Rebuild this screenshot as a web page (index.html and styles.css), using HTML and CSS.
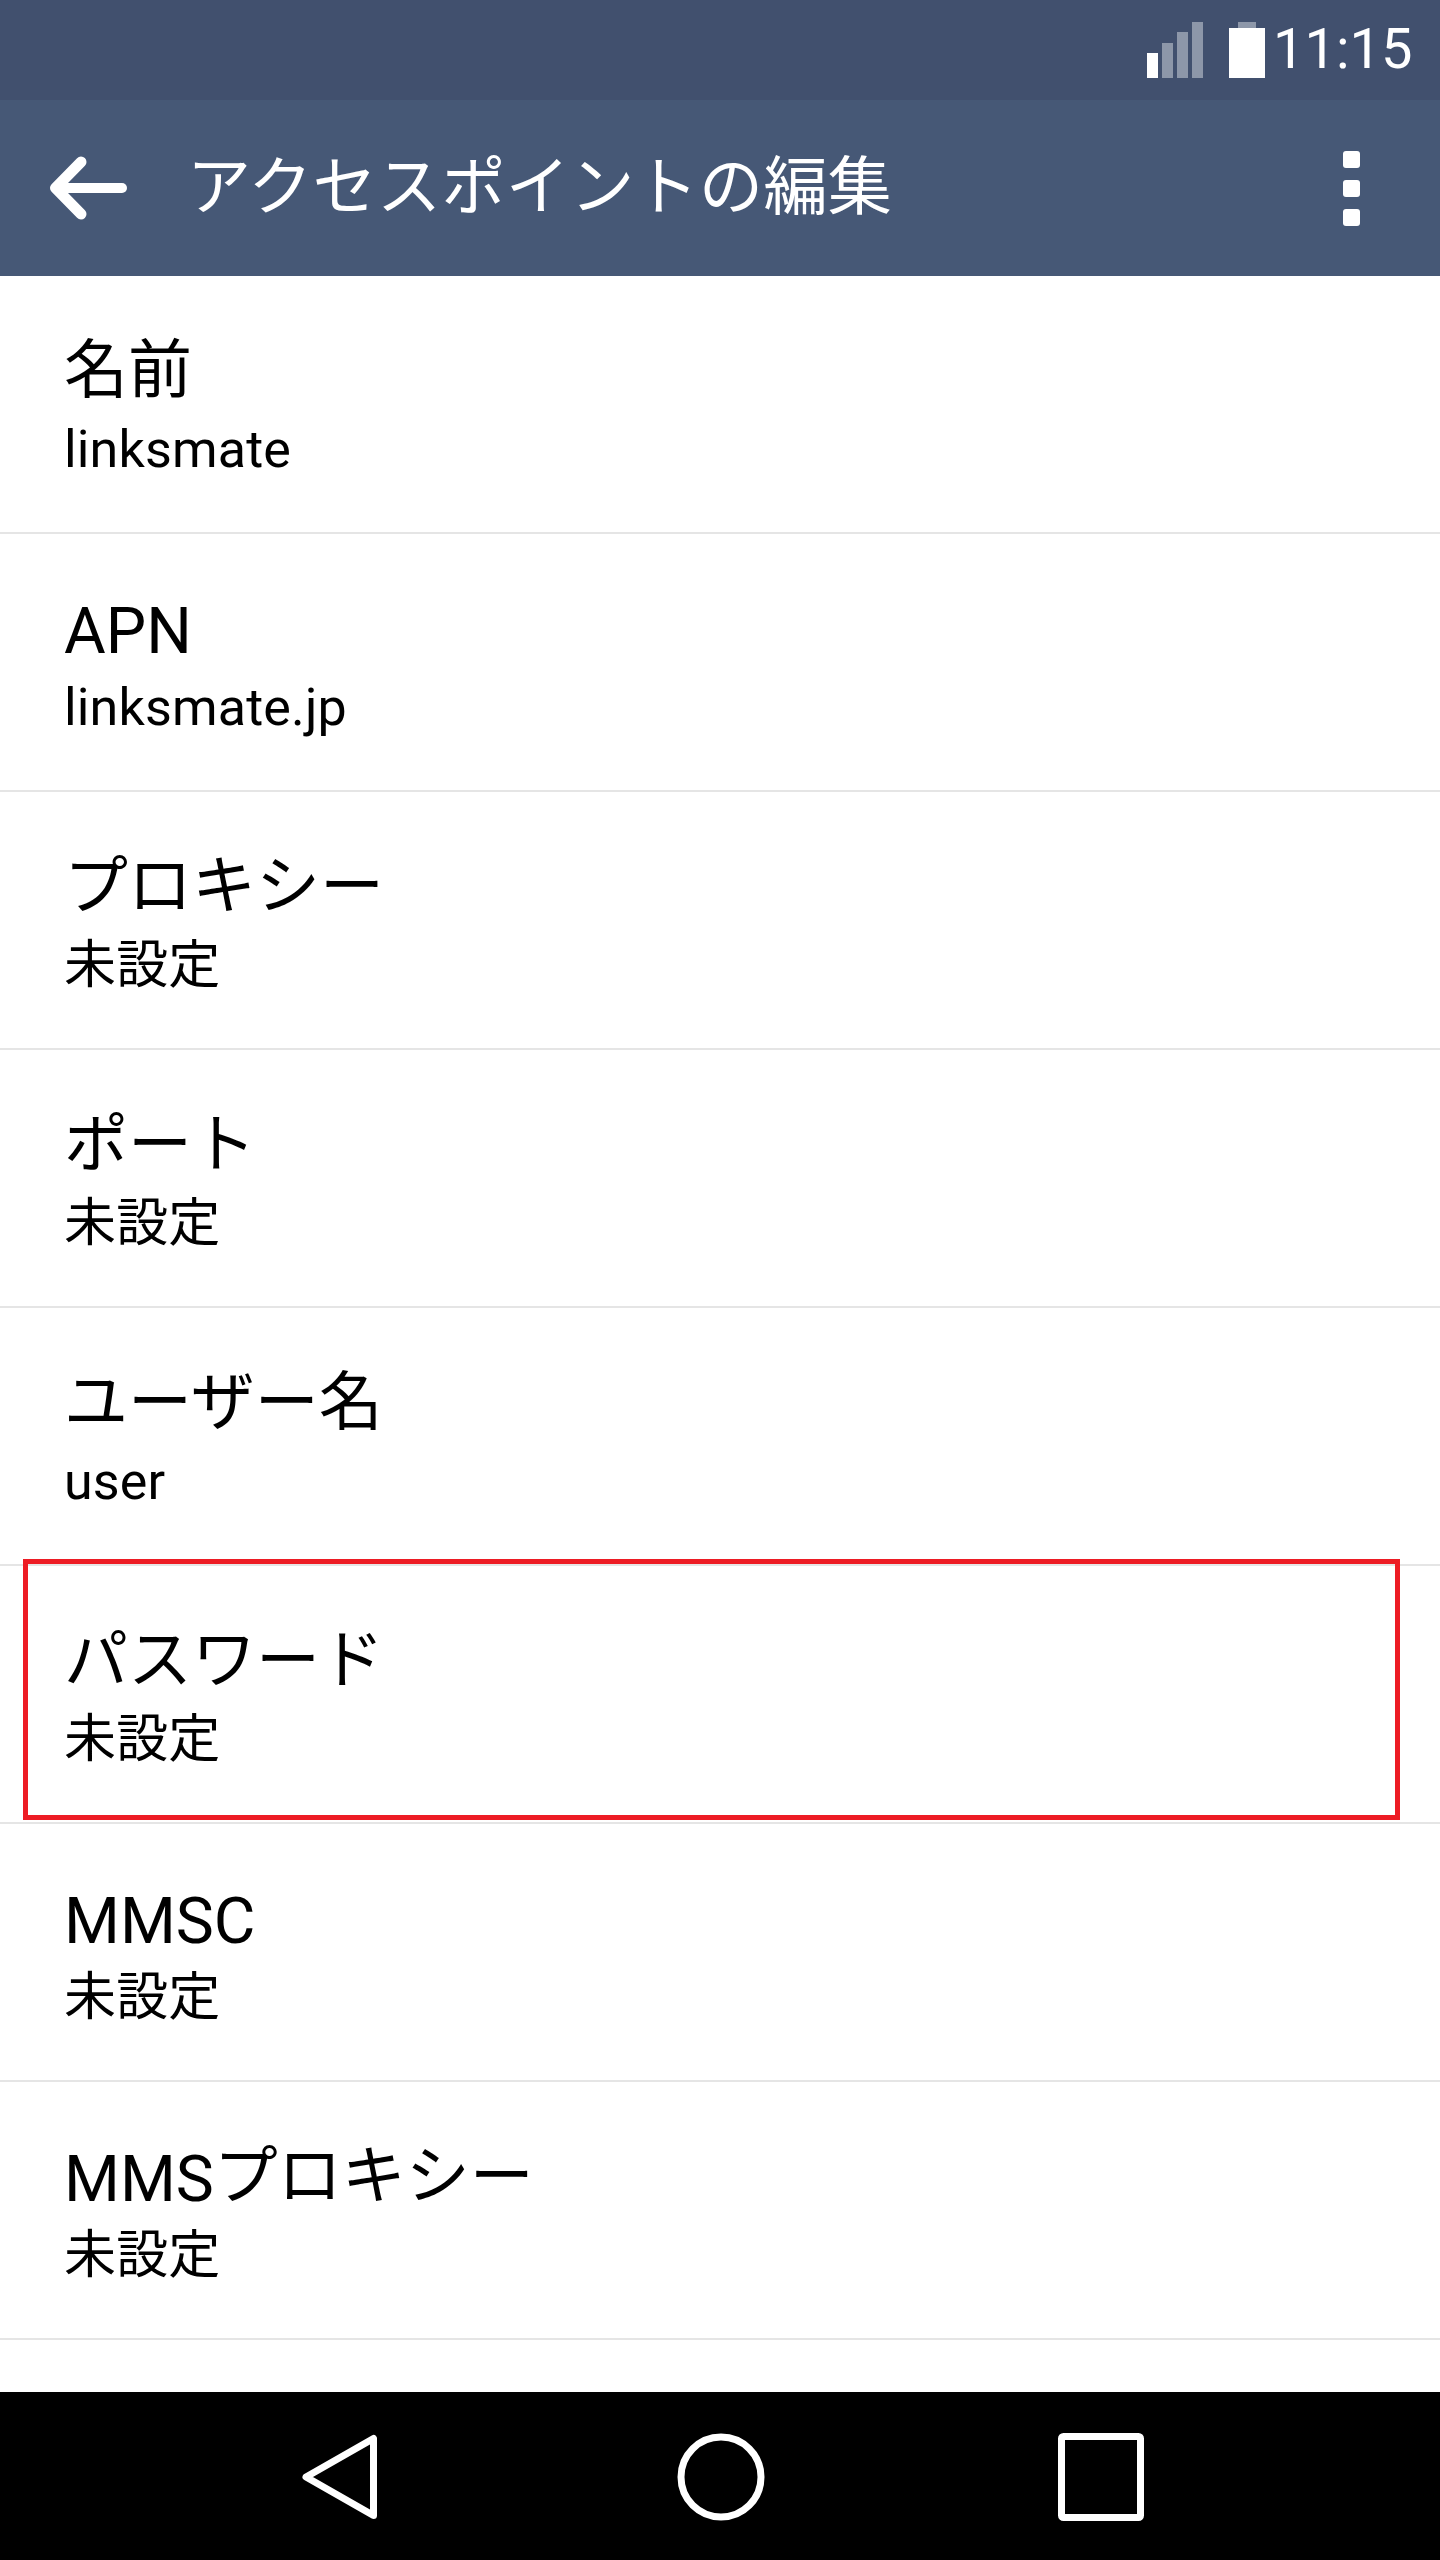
FILE: index.html
```html
<!DOCTYPE html>
<html lang="ja">
<head>
<meta charset="utf-8">
<title>アクセスポイントの編集</title>
<link rel="stylesheet" href="styles.css">
</head>
<body>
<div class="phone">
  <header class="status">
    <svg class="signal" width="56" height="56" viewBox="0 0 56 56">
      <rect class="on" x="0" y="31" width="11" height="25"/>
      <rect class="off" x="15" y="21" width="11" height="35"/>
      <rect class="off" x="30" y="10" width="11" height="46"/>
      <rect class="off" x="45" y="0" width="11" height="56"/>
    </svg>
    <svg class="battery" width="36" height="56" viewBox="0 0 36 56">
      <rect class="off" x="9" y="0" width="18" height="6"/>
      <rect class="on" x="0" y="6" width="36" height="50"/>
    </svg>
    <span class="clock">11:15</span>
  </header>
  <div class="toolbar">
    <svg class="back" width="78" height="64" viewBox="0 0 78 64">
      <path d="M73 32H7" fill="none" stroke="#fff" stroke-width="10" stroke-linecap="round"/>
      <path d="M32 6 6.500 32 32 58" fill="none" stroke="#fff" stroke-width="11" stroke-linecap="round" stroke-linejoin="round"/>
    </svg>
    <h1 class="title">アクセスポイントの編集</h1>
    <div class="more"><i></i><i></i><i></i></div>
  </div>
  <main class="list">
    <div class="row"><div class="label">名前</div><div class="value">linksmate</div></div>
    <div class="row"><div class="label"><span class="latin">APN</span></div><div class="value">linksmate.jp</div></div>
    <div class="row"><div class="label">プロキシー</div><div class="value">未設定</div></div>
    <div class="row"><div class="label">ポート</div><div class="value">未設定</div></div>
    <div class="row"><div class="label">ユーザー名</div><div class="value">user</div></div>
    <div class="row"><div class="label">パスワード</div><div class="value">未設定</div><span class="redbox"></span></div>
    <div class="row"><div class="label"><span class="latin">MMSC</span></div><div class="value">未設定</div></div>
    <div class="row"><div class="label"><span class="latin">MMS</span>プロキシー</div><div class="value">未設定</div></div>
  </main>
  <nav class="nav">
    <svg class="nav-back" width="78" height="88" viewBox="0 0 78 88"><path d="M5 44 72.500 5.500V82.500Z"/></svg>
    <svg class="nav-home" width="88" height="88" viewBox="0 0 88 88"><circle cx="44" cy="44" r="40"/></svg>
    <svg class="nav-recent" width="86" height="88" viewBox="0 0 86 88"><rect x="3.500" y="3.500" width="79" height="81" rx="2"/></svg>
  </nav>
</div>
</body>
</html>
```
FILE: styles.css
```css
* { box-sizing: border-box; }
html, body { margin: 0; padding: 0; background: #fff; }
.phone { width: 1440px; height: 2560px; display: flex; flex-direction: column; overflow: hidden; font-family: Roboto, "Noto Sans CJK JP", sans-serif; color: #000; }
.status { flex: 0 0 100px; background: #41506e; display: flex; align-items: flex-start; padding: 22px 0 0 1147px; color: #fff; }
.signal, .battery { display: block; flex: none; }
.battery { margin-left: 26px; }
.on { fill: #fff; }
.off { fill: #8d97a9; }
.clock { flex: none; margin-left: 8px; font-size: 56px; font-weight: 400; line-height: 54px; }
.toolbar { flex: 0 0 176px; background: #465876; display: flex; align-items: center; padding-left: 49px; color: #fff; }
.back { display: block; flex: none; }
.title { margin: 0 0 0 60px; font-size: 64px; font-weight: 400; line-height: 80px; letter-spacing: 0.4px; white-space: nowrap; }
.more { margin-left: auto; margin-right: 80px; display: flex; flex-direction: column; gap: 12px; }
.more i { display: block; width: 17px; height: 17px; border-radius: 3px; background: #fff; }
.list { flex: 1 1 auto; background: #fff; overflow: hidden; }
.row { height: 258px; border-bottom: 2px solid #e5e5e5; padding: 11px 64px 0; display: flex; flex-direction: column; justify-content: center; position: relative; }
.label { font-size: 64px; line-height: 76px; height: 76px; margin-bottom: 5px; white-space: nowrap; }
.latin { vertical-align: -3px; }
.value { font-size: 52px; line-height: 72px; letter-spacing: 0.15px; white-space: nowrap; }
.redbox { position: absolute; left: 23px; right: 40px; top: -7px; height: 261px; border: 5px solid #ed1c24; }
.nav { flex: 0 0 168px; background: #000; position: relative; }
.nav svg { display: block; position: absolute; top: 41px; fill: none; stroke: #fff; stroke-width: 7; stroke-linejoin: round; }
.nav-back { left: 301px; }
.nav-home { left: 677px; }
.nav-recent { left: 1058px; }
```
